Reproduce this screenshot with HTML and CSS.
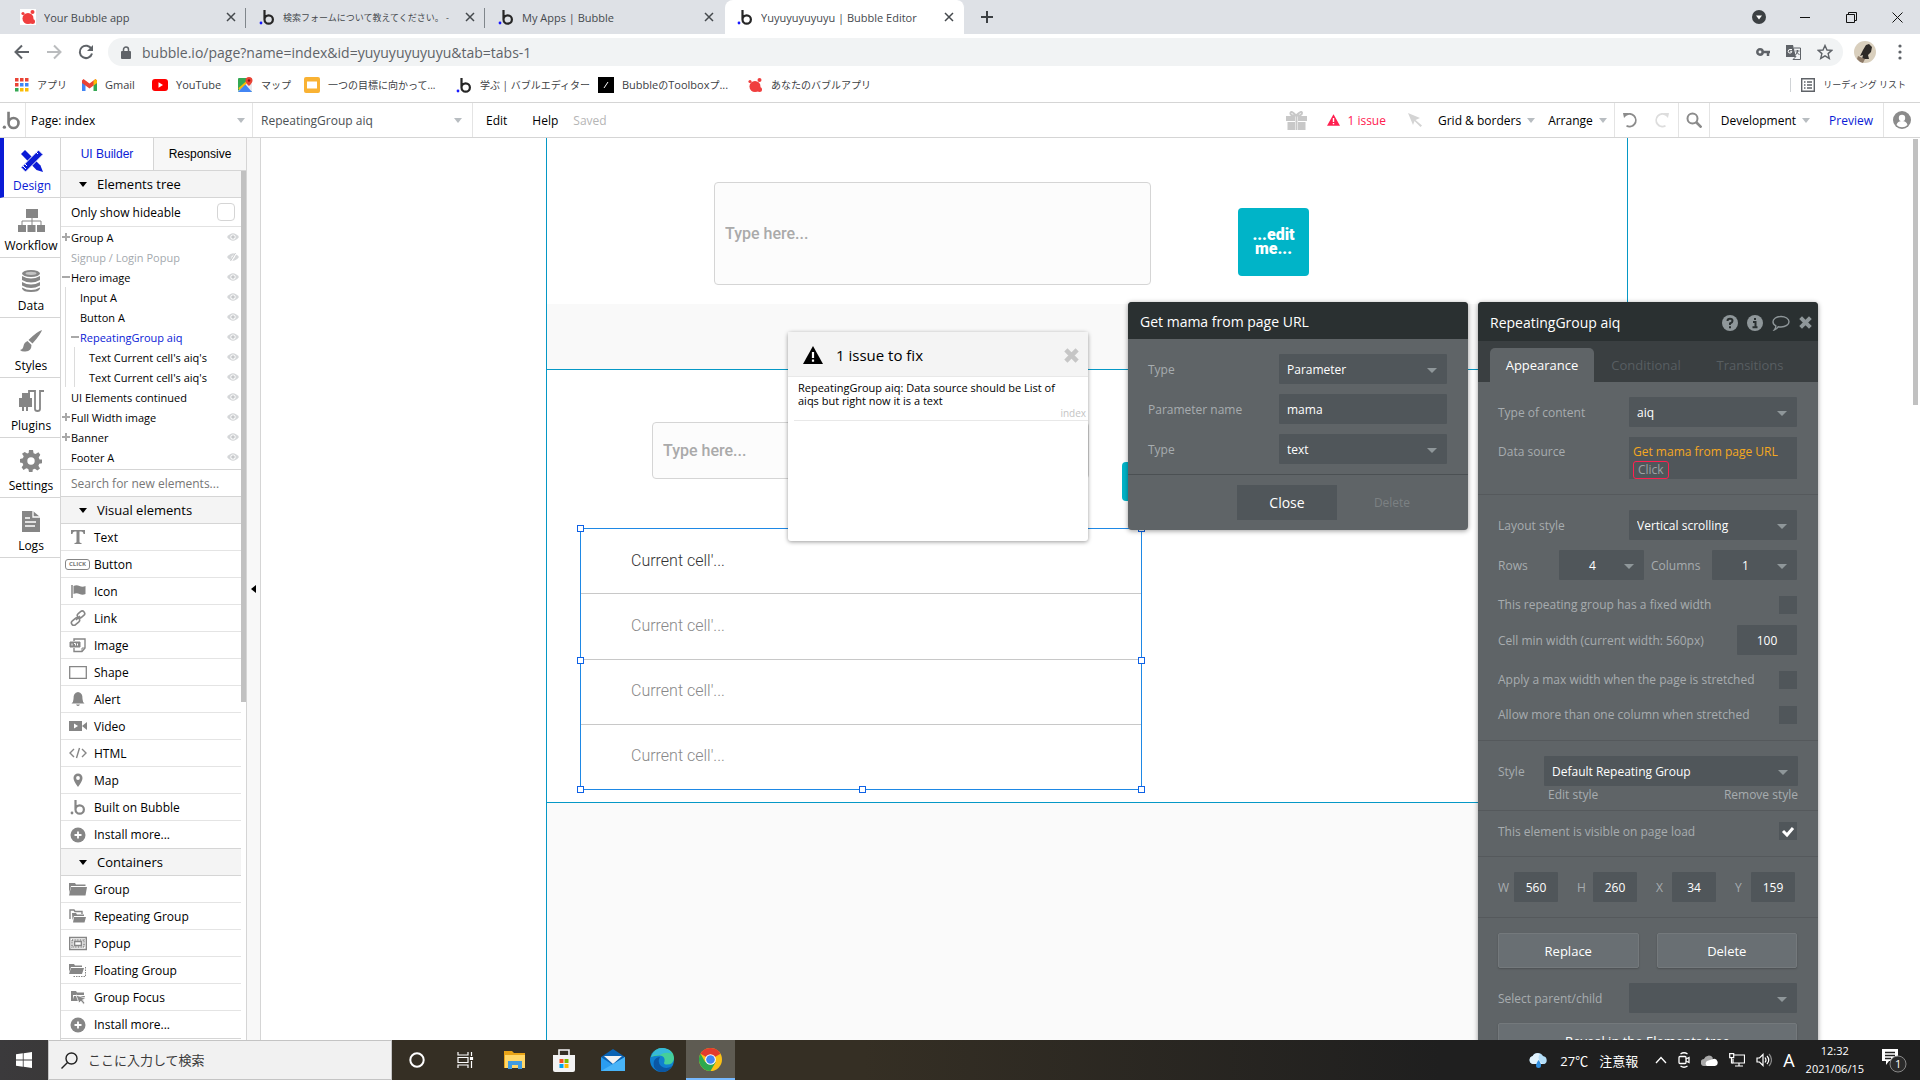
FILE: index.html
```html
<!DOCTYPE html>
<html lang="ja">
<head>
    <meta charset="UTF-8">
    <meta name="viewport" content="width=device-width, initial-scale=1.0">
    <title>Yuyuyuyuyuyu | Bubble Editor</title>
    <link rel="stylesheet" href="styles.css">
</head>
<body>
    <!-- shared icons -->
    <svg class="sprite" width="0" height="0" aria-hidden="true">
        <symbol id="i-b" viewBox="0 0 16 16">
            <path d="M5.5 1v9.5a4.2 4.2 0 1 0 4.2-4.2c-2.4 0-4.2 1.8-4.2 4.2" fill="none" stroke="currentColor" stroke-width="2.2"/>
            <circle class="dot" cx="2" cy="14" r="1.4"/>
        </symbol>
        <symbol id="i-fruit" viewBox="0 0 16 16">
            <circle cx="8" cy="9.500" r="5.500" fill="#f03e3e"/>
            <circle cx="12.500" cy="3" r="2" fill="#f03e3e"/>
            <circle cx="3" cy="4.500" r="1.600" fill="#f03e3e"/>
            <circle cx="12.500" cy="12.500" r="2.500" fill="#f03e3e"/>
        </symbol>
        <symbol id="i-x" viewBox="0 0 10 10"><path d="M1 1l8 8M9 1l-8 8" stroke="currentColor" stroke-width="1.500"/></symbol>
        <symbol id="i-bigx" viewBox="0 0 12 12"><path d="M1.500 1.500l9 9M10.500 1.500l-9 9" stroke="currentColor" stroke-width="3.600"/></symbol>
        <symbol id="i-eye" viewBox="0 0 12 8"><path d="M0 4q6-7.500 12 0q-6 7.500-12 0z" fill="#d4d6d8"/><circle cx="6" cy="4" r="2.600" fill="#fff"/><circle cx="6" cy="4" r="1.800" fill="#c6c8ca"/></symbol>
        <symbol id="i-eye-off" viewBox="0 0 12 8"><path d="M0 4q6-7.500 12 0q-6 7.500-12 0z" fill="#d4d6d8"/><circle cx="6" cy="4" r="1.600" fill="#fff"/><path d="M9 0L4 8" stroke="#fff" stroke-width="2"/><path d="M8.500 0L3.500 8" stroke="#c6c8ca"/></symbol>
        <symbol id="i-plus" viewBox="0 0 8 8"><path d="M4 0v8M0 4h8" stroke="#a8a8a8" stroke-width="2"/></symbol>
        <symbol id="i-minus" viewBox="0 0 8 8"><path d="M0 4h8" stroke="#a8a8a8" stroke-width="2"/></symbol>
        <symbol id="i-warn" viewBox="0 0 20 18"><path d="M10 0L20 18H0z" fill="currentColor"/><path d="M10 6v6M10 13.500v2.200" stroke="#fff" stroke-width="2.200"/></symbol>
        <symbol id="i-more" viewBox="0 0 16 16"><circle cx="8" cy="8" r="7.500" fill="#868686"/><path d="M8 4.500v7M4.500 8h7" stroke="#fff" stroke-width="1.800"/></symbol>
    </svg>

    <header class="browser">
        <div class="tab-strip">
            <div class="tab">
                <svg class="fav on-white"><use href="#i-fruit"/></svg>
                <span class="tab-title">Your Bubble app</span>
                <button class="tab-close" aria-label="Close tab"><svg><use href="#i-x"/></svg></button>
            </div>
            <div class="tab">
                <svg class="fav"><use href="#i-b"/></svg>
                <span class="tab-title ja-small">検索フォームについて教えてください。 -</span>
                <button class="tab-close" aria-label="Close tab"><svg><use href="#i-x"/></svg></button>
            </div>
            <div class="tab">
                <svg class="fav"><use href="#i-b"/></svg>
                <span class="tab-title">My Apps | Bubble</span>
                <button class="tab-close" aria-label="Close tab"><svg><use href="#i-x"/></svg></button>
            </div>
            <div class="tab active">
                <svg class="fav"><use href="#i-b"/></svg>
                <span class="tab-title">Yuyuyuyuyuyu | Bubble Editor</span>
                <button class="tab-close" aria-label="Close tab"><svg><use href="#i-x"/></svg></button>
            </div>
            <button class="new-tab" aria-label="New tab"><svg width="12" height="12" viewBox="0 0 12 12"><path d="M6 0v12M0 6h12" stroke="#3c4043" stroke-width="2"/></svg></button>
            <div class="window-buttons">
                <button aria-label="Search tabs"><svg width="14" height="14" viewBox="0 0 14 14"><circle cx="7" cy="7" r="7" fill="#3c4043"/><path d="M4 5.500h6L7 9.500z" fill="#fff"/></svg></button>
                <button aria-label="Minimize"><svg width="10" height="10" viewBox="0 0 10 10"><path d="M0 5.500h10" stroke="#111"/></svg></button>
                <button aria-label="Restore"><svg width="11" height="11" viewBox="0 0 11 11" fill="none" stroke="#111"><path d="M.5 2.500h8v8h-8zM2.500 2.500v-2h8v8h-2"/></svg></button>
                <button aria-label="Close"><svg width="11" height="11" viewBox="0 0 11 11"><path d="M.5.5l10 10M10.500.5l-10 10" stroke="#111"/></svg></button>
            </div>
        </div>
        <div class="address-row">
            <button aria-label="Back"><svg width="16" height="16" viewBox="0 0 16 16" fill="none" stroke="#5f6368" stroke-width="2"><path d="M15 8H2M8 1.500L1.500 8 8 14.500"/></svg></button>
            <button aria-label="Forward"><svg width="16" height="16" viewBox="0 0 16 16" fill="none" stroke="#babcbe" stroke-width="2"><path d="M1 8h13M8 1.500L14.500 8 8 14.500"/></svg></button>
            <button aria-label="Reload"><svg width="16" height="16" viewBox="0 0 16 16"><path d="M13.500 5A6.200 6.200 0 1 0 14 9.500" fill="none" stroke="#5f6368" stroke-width="2"/><path d="M15 1v6H9z" fill="#5f6368"/></svg></button>
            <div class="address">
                <svg width="10" height="13" viewBox="0 0 10 13"><rect y="5" width="10" height="8" rx="1" fill="#5f6368"/><path d="M2.500 5V3.500a2.500 2.500 0 0 1 5 0V5" fill="none" stroke="#5f6368" stroke-width="1.500"/></svg>
                <input type="text" aria-label="Address" value="bubble.io/page?name=index&amp;id=yuyuyuyuyuyu&amp;tab=tabs-1">
                <svg width="14" height="10" viewBox="0 0 14 10"><circle cx="4" cy="5" r="2.700" fill="none" stroke="#5f6368" stroke-width="2.500"/><path d="M6 5h8M12 5v4" stroke="#5f6368" stroke-width="2.500"/></svg>
                <svg width="15" height="15" viewBox="0 0 15 15"><path d="M0 0h7l3 12H0z" fill="#5f6368"/><path d="M8 3h6.500v11.500H7l3-3M9.500 6h4M11.500 5v1q0 2-2 4M10.500 7l3 3" fill="none" stroke="#5f6368"/><path d="M6 4.500H4a1.800 1.800 0 1 0 1.800 1.800H4.200" fill="none" stroke="#fff"/></svg>
                <svg width="16" height="16" viewBox="0 0 16 16"><path d="M8 1.500l2 4.500 4.800.4-3.700 3.200 1.200 4.800L8 11.800l-4.300 2.600 1.200-4.800L1.200 6.400 6 6z" fill="none" stroke="#5f6368" stroke-width="1.400"/></svg>
            </div>
            <svg class="avatar" width="22" height="22" viewBox="0 0 22 22"><circle cx="11" cy="11" r="11" fill="#d9cfbd"/><path d="M12 4l3-1 3 3-1 5-3 3 1 4H8l1-4-3 1 3-6z" fill="#2d2926"/><path d="M4 15l7 3-2 4a11 11 0 0 1-6-4z" fill="#8d7a68"/></svg>
            <button aria-label="Menu"><svg width="4" height="16" viewBox="0 0 4 16" fill="#5f6368"><circle cx="2" cy="2" r="1.600"/><circle cx="2" cy="8" r="1.600"/><circle cx="2" cy="14" r="1.600"/></svg></button>
        </div>
        <nav class="bookmarks">
            <a href="#"><svg width="14" height="14" viewBox="0 0 14 14"><path d="M0 0h3.500v3.500H0zM5 0h3.500v3.500H5zM10 0h3.500v3.500H10zM0 5h3.500v3.500H0z" fill="#ea4335"/><path d="M5 5h3.500v3.500H5zM10 5h3.500v3.500H10z" fill="#4285f4"/><path d="M0 10h3.500v3.500H0z" fill="#34a853"/><path d="M5 10h3.500v3.500H5zM10 10h3.500v3.500H10z" fill="#fbbc04"/></svg><span class="ja">アプリ</span></a>
            <a href="#"><svg width="15" height="12" viewBox="0 0 15 12"><path d="M0 1.500V12h3.500V5z" fill="#4285f4"/><path d="M15 1.500V12h-3.500V5z" fill="#34a853"/><path d="M0 1.500L1.500 0 7.500 4.500 13.500 0 15 1.500V4L7.500 9.500 0 4z" fill="#ea4335"/><path d="M11.500 2L13.500 0 15 1.500V4l-3.500 2.600z" fill="#fbbc04"/></svg><span>Gmail</span></a>
            <a href="#"><svg width="16" height="12" viewBox="0 0 16 12"><rect width="16" height="12" rx="3" fill="#f00"/><path d="M6.500 3.200v5.600L11 6z" fill="#fff"/></svg><span>YouTube</span></a>
            <a href="#"><svg width="15" height="15" viewBox="0 0 15 15"><rect y="1" width="14" height="14" rx="1" fill="#34a853"/><path d="M0 14L13 1l1 1v12l-1 1H1z" fill="#e8eaed"/><path d="M0 15L7 7l7 8z" fill="#4285f4"/><path d="M1 12L11 3" stroke="#fbbc04" stroke-width="2"/><path d="M11 0a3.500 3.500 0 0 1 3.500 3.500C14.500 6 11 9 11 9S7.500 6 7.500 3.500A3.500 3.500 0 0 1 11 0z" fill="#ea4335"/><circle cx="11" cy="3.500" r="1.200" fill="#811"/></svg><span class="ja">マップ</span></a>
            <a href="#"><svg width="16" height="16" viewBox="0 0 16 16"><rect width="16" height="16" rx="2" fill="#f9b233"/><path d="M3 4.500h10v7H3z" fill="#fff"/></svg><span class="ja">一つの目標に向かって...</span></a>
            <a href="#"><svg class="fav"><use href="#i-b"/></svg><span class="ja">学ぶ | バブルエディター</span></a>
            <a href="#"><svg width="16" height="16" viewBox="0 0 16 16"><path d="M0 0h16v16H0z"/><path d="M6 11l4-6" stroke="#fff"/></svg><span>Bubble<span class="ja">の</span>Toolbox<span class="ja">プ</span>...</span></a>
            <a href="#"><svg class="fav"><use href="#i-fruit"/></svg><span class="ja">あなたのバブルアプリ</span></a>
            <a href="#" class="reading"><svg width="14" height="14" viewBox="0 0 14 14" fill="none" stroke="#5f6368"><path d="M.7.700h12.600v12.600H.7z" stroke-width="1.400"/><path d="M3 4h1.500M3 7h1.500M3 10h1.500M6 4h5M6 7h5M6 10h5" stroke-width="1.300"/></svg><span class="ja-small">リーディング リスト</span></a>
        </nav>
    </header>

    <div class="editor-bar">
        <a href="#" class="logo" aria-label="Bubble"><svg width="19" height="20"><use href="#i-b"/></svg></a>
        <button class="picker page-picker">Page: index<i class="caret"></i></button>
        <button class="picker element-picker">RepeatingGroup aiq<i class="caret"></i></button>
        <button class="plain">Edit</button>
        <button class="plain">Help</button>
        <span class="saved">Saved</span>
        <div class="bar-right">
            <svg class="gift" width="21" height="19" viewBox="0 0 21 19" fill="#c8c8c8"><path d="M0 5h9v5H0zM12 5h9v5h-9zM1.500 11H9v8H1.500zM12 11h7.500v8H12z"/><path d="M9.500 5h2v14h-2z"/><path d="M10 4.500Q4 5 4.500 2T10 4.500Q16 5 16 2t-6 2.500" fill="none" stroke="#c8c8c8" stroke-width="2"/></svg>
            <button class="issue"><svg width="13" height="12"><use href="#i-warn"/></svg>1 issue</button>
            <svg class="cursor" width="14" height="14" viewBox="0 0 14 14"><path d="M0 0l12 5-4.500 2L14 12.500 12.500 14 6.500 8 5 12z" fill="#d4d4d4"/></svg>
            <button class="menu">Grid &amp; borders<i class="caret small"></i></button>
            <button class="menu">Arrange<i class="caret small"></i></button>
            <button class="tool" aria-label="Undo"><svg width="16" height="16" viewBox="0 0 16 16"><path d="M4 3a6.300 6.300 0 1 1 .5 10.800" fill="none" stroke="#8b8b8b" stroke-width="1.800"/><path d="M1 1h6L2 6z" fill="#8b8b8b"/></svg></button>
            <button class="tool" aria-label="Redo"><svg width="16" height="16" viewBox="0 0 16 16"><path d="M12 3a6.300 6.300 0 1 0-.5 10.800" fill="none" stroke="#ddd" stroke-width="1.800"/><path d="M15 1H9l5 5z" fill="#ddd"/></svg></button>
            <button class="tool lined" aria-label="Search"><svg width="16" height="16" viewBox="0 0 16 16" fill="none" stroke="#8b8b8b" stroke-width="2"><circle cx="6.500" cy="6.500" r="5"/><path d="M10 10l5.500 5.500" stroke-width="2.600"/></svg></button>
            <button class="menu dev">Development<i class="caret small"></i></button>
            <a href="#" class="preview">Preview</a>
            <button class="user" aria-label="Account"><svg width="18" height="18" viewBox="0 0 18 18"><circle cx="9" cy="9" r="9" fill="#8b8b8b"/><circle cx="9" cy="7" r="3.200" fill="#fff"/><path d="M3.500 14q1-4 5.500-4t5.500 4a7.800 7.800 0 0 1-11 0z" fill="#fff"/></svg></button>
        </div>
    </div>

    <div class="workspace">
        <nav class="side-nav">
            <a href="#" class="active"><svg width="22" height="22" viewBox="0 0 22 22" fill="currentColor"><path d="M4 0l15.500 15.500L22 22l-6.500-2L0 4z"/><path d="M17.500 0L22 4.500 4.500 22 0 17.500z" stroke="#fff"/><path d="M2 16l3 3M4 14l2 2M15 2l2 2" stroke="#fff"/></svg>Design</a>
            <a href="#"><svg width="27" height="23" viewBox="0 0 27 23" fill="#868686"><path d="M8 0h12v9H8zM0 16h8v7H0zM9.500 16h8v7h-8zM19 16h8v7h-8z"/><path d="M14 9v7M4 16v-4h19v4" fill="none" stroke="#868686"/></svg>Workflow</a>
            <a href="#"><svg width="18" height="22" viewBox="0 0 18 22" fill="#868686"><ellipse cx="9" cy="3.500" rx="9" ry="3.500"/><path d="M0 6q9 5 18 0v4q-9 5-18 0zM0 12q9 5 18 0v3.500q-9 5-18 0zM0 17.500q9 5 18 0v1q-1 3.500-9 3.500t-9-3.500z"/><ellipse cx="9" cy="3.300" rx="5.500" ry="1.600" fill="#c4c4c4"/></svg>Data</a>
            <a href="#"><svg width="22" height="22" viewBox="0 0 22 22" fill="#868686"><path d="M22 0q-1 4-9.500 13.500L8.500 10Q17 1.500 22 0zM7.500 11l4 4q0 6-6 6.500Q2 22 0 20q3-.5 3.500-4t4-5z"/></svg>Styles</a>
            <a href="#"><svg width="25" height="22" viewBox="0 0 25 22" fill="#868686"><path d="M0 8h13v9H9v4H7v-4H5v4H3v-4H0zM3 3h8v6H3z"/><path d="M10 3V1h6v18q0 2 2.500 2t2.500-2V1h4" fill="none" stroke="#868686" stroke-width="1.800"/></svg>Plugins</a>
            <a href="#"><svg width="22" height="22" viewBox="0 0 22 22" fill="#868686"><path d="M9 0h4l.6 3.200 2 .9L18.400 2.200l1.900 2.600-1.600 2.600.8 2H22v3.800l-2.800.6-.8 1.900 1.600 2.800-2.600 1.900-2.500-1.700-2.100.9L12.500 22h-3.500l-.7-2.900-2-.8-2.800 1.600-1.900-2.600L3.300 15l-.8-2L0 12.500V9l2.900-.7.8-2L2 3.700 4.700 1.900l2.500 1.700 1.400-.6z"/><circle cx="11" cy="11" r="3.700" fill="#fff"/></svg>Settings</a>
            <a href="#"><svg width="18" height="21" viewBox="0 0 18 21" fill="#868686"><path d="M0 0h11l7 6v15H0z"/><path d="M11 0v6h7M3 7h5M3 11h11M3 15h10" fill="none" stroke="#fff" stroke-width="1.300"/></svg>Logs</a>
        </nav>

        <aside class="panel">
            <div class="panel-tabs">
                <button class="active">UI Builder</button>
                <button>Responsive</button>
            </div>
            <div class="panel-scroll">
                <div class="panel-content">
                    <h2>Elements tree</h2>
                    <label class="hideable">Only show hideable<input type="checkbox"></label>
                    <ul class="tree">
                        <li><div><svg class="tg"><use href="#i-plus"/></svg>Group A<svg class="eye"><use href="#i-eye"/></svg></div></li>
                        <li class="hidden-el"><div><i class="tg"></i>Signup / Login Popup<svg class="eye"><use href="#i-eye-off"/></svg></div></li>
                        <li><div><svg class="tg"><use href="#i-minus"/></svg>Hero image<svg class="eye"><use href="#i-eye"/></svg></div>
                            <ul>
                                <li><div><i class="tg"></i>Input A<svg class="eye"><use href="#i-eye"/></svg></div></li>
                                <li><div><i class="tg"></i>Button A<svg class="eye"><use href="#i-eye"/></svg></div></li>
                                <li><div class="selected"><svg class="tg"><use href="#i-minus"/></svg>RepeatingGroup aiq<svg class="eye"><use href="#i-eye"/></svg></div>
                                    <ul>
                                        <li><div><i class="tg"></i>Text Current cell's aiq's<svg class="eye"><use href="#i-eye"/></svg></div></li>
                                        <li><div><i class="tg"></i>Text Current cell's aiq's<svg class="eye"><use href="#i-eye"/></svg></div></li>
                                    </ul>
                                </li>
                            </ul>
                        </li>
                        <li><div><i class="tg"></i>UI Elements continued<svg class="eye"><use href="#i-eye"/></svg></div></li>
                        <li><div><svg class="tg"><use href="#i-plus"/></svg>Full Width image<svg class="eye"><use href="#i-eye"/></svg></div></li>
                        <li><div><svg class="tg"><use href="#i-plus"/></svg>Banner<svg class="eye"><use href="#i-eye"/></svg></div></li>
                        <li><div><i class="tg"></i>Footer A<svg class="eye"><use href="#i-eye"/></svg></div></li>
                    </ul>
                    <input class="element-search" type="text" aria-label="Search for new elements" placeholder="Search for new elements...">
                    <h2>Visual elements</h2>
                    <ul class="palette">
                        <li><svg viewBox="0 0 18 16"><path d="M2 1h14v4h-1.500q0-2.500-2.500-2.500h-1.500V13q0 1 2 1v1h-7v-1q2 0 2-1V2.500H6Q3.500 2.500 3.500 5H2z" fill="#868686"/></svg>Text</li>
                        <li><span class="click-icon">CLICK</span>Button</li>
                        <li><svg viewBox="0 0 18 16"><path d="M3 2v13" stroke="#868686" stroke-width="1.500"/><path d="M4.500 3q3-1.500 6 0t6 0v8q-3 1.500-6 0t-6 0z" fill="#868686"/></svg>Icon</li>
                        <li><svg viewBox="0 0 18 16" fill="none" stroke="#868686" stroke-width="1.600"><rect x="8" y="2" width="8" height="5" rx="2.500" transform="rotate(-40 12 4.500)"/><rect x="2" y="9" width="9" height="5" rx="2.500" transform="rotate(-40 6.500 11.500)"/><path d="M7 10l4-4"/></svg>Link</li>
                        <li><svg viewBox="0 0 18 16" fill="none" stroke="#868686"><path d="M5 4V2h11v9l-3 3.500H5V11" stroke-width="1.400"/><path d="M13 14v-3h3"/><path d="M1 5h10v5H1z" fill="#868686"/><path d="M3 6.500v2M5 6.500h1.500v2M8.500 6.500v2" stroke="#fff"/></svg>Image</li>
                        <li><svg viewBox="0 0 18 16"><path d="M.7 2.700h16.600v11.600H.7z" fill="none" stroke="#868686" stroke-width="1.300"/></svg>Shape</li>
                        <li><svg viewBox="0 0 18 16" fill="#868686"><path d="M9 1q5 1 4.500 7 0 3 2 4.500h-13Q4.500 11 4.500 8 4 2 9 1z"/><path d="M7 13.500h4q-2 3-4 0z"/></svg>Alert</li>
                        <li><svg viewBox="0 0 18 16"><path d="M0 3h13v10H0zM13 8l5-4v8z" fill="#868686"/><path d="M5 5.500v5L9 8z" fill="#fff"/></svg>Video</li>
                        <li><svg viewBox="0 0 18 16"><path d="M5 4L1 8l4 4M13 4l4 4-4 4M10.500 3l-3 10" fill="none" stroke="#868686" stroke-width="1.400"/></svg>HTML</li>
                        <li><svg viewBox="0 0 18 16"><path d="M9 1.500a4.500 4.500 0 0 1 4.500 4.500Q13.500 9 9 15 4.500 9 4.500 6A4.500 4.500 0 0 1 9 1.500z" fill="#868686"/><circle cx="9" cy="6" r="1.900" fill="#fff"/></svg>Map</li>
                        <li><svg class="grey-b"><use href="#i-b"/></svg>Built on Bubble</li>
                        <li><svg><use href="#i-more"/></svg>Install more...</li>
                    </ul>
                    <h2>Containers</h2>
                    <ul class="palette">
                        <li><svg viewBox="0 0 18 16"><path d="M0 2h6l1 1.500h9.500V5H2L0 12zM2 6H18l-1.500 8.500H0z" fill="#868686"/></svg>Group</li>
                        <li><svg viewBox="0 0 18 16"><path d="M1 11V2h4l1 1.500h7V6" fill="none" stroke="#868686" stroke-width="1.400"/><path d="M3 5h4l1 1.500h7V8H5l-1.500 4zM5 9h12l-1.500 5.500H4z" fill="#868686"/></svg>Repeating Group</li>
                        <li><svg viewBox="0 0 18 16" fill="none" stroke="#868686"><path d="M.7 2.500h16.600v12H.7z" stroke-width="1.400"/><path d="M3 5h12v7H3z" stroke-width="1.600" stroke-dasharray="1 .6"/><path d="M5.500 6.500h7v4h-7z" stroke-width="1.600"/></svg>Popup</li>
                        <li><svg viewBox="0 0 18 16"><path d="M0 2h5l1 1.500h7V5H2L0 10zM2 6h13l-2 6H0z" fill="#868686"/><path d="M16.500 5v9.500h-12" fill="none" stroke="#868686" stroke-dasharray="1.500 1"/></svg>Floating Group</li>
                        <li><svg viewBox="0 0 18 16"><path d="M2 2h5l1 1.500h7V6H4v6H2z" fill="#868686"/><path d="M5 7h11l-2 5H3.500z" fill="#868686"/><path d="M7 6l10 3.500-3.500 1.300L16 14l-1.500 1.200-2.500-3L10 14z" fill="#868686" stroke="#fff" stroke-width=".8"/></svg>Group Focus</li>
                        <li><svg><use href="#i-more"/></svg>Install more...</li>
                    </ul>
                </div>
                <div class="panel-thumb"></div>
            </div>
        </aside>
        <button class="collapse" aria-label="Collapse panel"></button>

        <main class="canvas">
            <div class="artboard">
                <section class="hero"></section>
                <section class="hero-tail"></section>
                <section class="middle"></section>
                <section class="rest"></section>
                <input class="field field-top" type="text" aria-label="Input A" placeholder="Type here...">
                <button class="cta cta-top">...edit me...</button>
                <input class="field field-mid" type="text" aria-label="Input" placeholder="Type here...">
                <button class="cta cta-mid" aria-label="Button A"></button>
                <div class="rg">
                    <div class="cell">Current cell'...</div>
                    <div class="cell">Current cell'...</div>
                    <div class="cell">Current cell'...</div>
                    <div class="cell">Current cell'...</div>
                    <i class="handle nw"></i><i class="handle ne"></i><i class="handle w"></i><i class="handle e"></i>
                    <i class="handle sw"></i><i class="handle s"></i><i class="handle se"></i>
                </div>
            </div>
            <div class="canvas-thumb"></div>
        </main>

        <section class="issues">
            <header><svg width="20" height="18"><use href="#i-warn"/></svg>1 issue to fix<button aria-label="Close"><svg width="15" height="15"><use href="#i-bigx"/></svg></button></header>
            <div class="issue-item">
                <p>RepeatingGroup aiq: Data source should be List of aiqs but right now it is a text</p>
                <small>index</small>
            </div>
        </section>

        <section class="props expression">
            <header>Get mama from page URL</header>
            <div class="group">
                <div class="row"><label for="p-type">Type</label><span class="select wide"><select id="p-type"><option>Parameter</option></select></span></div>
                <div class="row"><label for="p-name">Parameter name</label><input class="wide" id="p-name" type="text" value="mama"></div>
                <div class="row"><label for="p-kind">Type</label><span class="select wide"><select id="p-kind"><option>text</option></select></span></div>
            </div>
            <footer><button class="close-btn">Close</button><button class="delete-link" disabled>Delete</button></footer>
        </section>

        <section class="props editor">
            <header>RepeatingGroup aiq
                <span class="head-icons">
                    <svg width="16" height="16" viewBox="0 0 16 16"><circle cx="8" cy="8" r="8" fill="#8f979a"/><path d="M5.500 6Q5.500 3.700 8 3.700T10.500 6Q10.500 7.500 8 8.500V10M8 11.200v2" fill="none" stroke="#2a3031" stroke-width="2"/></svg>
                    <svg width="16" height="16" viewBox="0 0 16 16"><circle cx="8" cy="8" r="8" fill="#8f979a"/><path d="M8 3v2M6 7h2.500v5M5.500 12.300h5" fill="none" stroke="#2a3031" stroke-width="2"/></svg>
                    <svg width="18" height="16" viewBox="0 0 18 16"><path d="M9 1.500c4.500 0 8 2.300 8 5.200s-3.500 5.300-8 5.300q-1.500 0-2.800-.3Q5 14 2.500 14.800 4 13 3.800 10.800 1 9.300 1 6.700C1 3.800 4.500 1.500 9 1.500z" fill="none" stroke="#8f979a" stroke-width="1.400"/></svg>
                    <svg width="13" height="13"><use href="#i-bigx"/></svg>
                </span>
            </header>
            <div class="prop-tabs">
                <button class="active">Appearance</button>
                <button>Conditional</button>
                <button>Transitions</button>
            </div>
            <div class="group">
                <div class="row"><label for="e-type">Type of content</label><span class="select wide"><select id="e-type"><option>aiq</option></select></span></div>
                <div class="row top"><span class="name">Data source</span><div class="source wide"><a href="#">Get mama from page URL</a><button>Click</button></div></div>
            </div>
            <div class="group">
                <div class="row"><label for="e-layout">Layout style</label><span class="select wide"><select id="e-layout"><option>Vertical scrolling</option></select></span></div>
                <div class="row counts"><label for="e-rows">Rows</label><span class="select count"><select id="e-rows"><option>4</option></select></span><label for="e-cols">Columns</label><span class="select count"><select id="e-cols"><option>1</option></select></span></div>
                <div class="row check"><label for="e-fixed">This repeating group has a fixed width</label><input id="e-fixed" type="checkbox"></div>
                <div class="row"><label for="e-min">Cell min width (current width: 560px)</label><input class="min" id="e-min" type="text" value="100"></div>
                <div class="row check"><label for="e-max">Apply a max width when the page is stretched</label><input id="e-max" type="checkbox"></div>
                <div class="row check"><label for="e-more">Allow more than one column when stretched</label><input id="e-more" type="checkbox"></div>
            </div>
            <div class="group style-group">
                <div class="row"><label for="e-style">Style</label><span class="select style-select"><select id="e-style"><option>Default Repeating Group</option></select></span></div>
                <div class="style-links"><a href="#">Edit style</a><a href="#">Remove style</a></div>
            </div>
            <div class="group visible-group">
                <div class="row"><label for="e-vis">This element is visible on page load</label><input id="e-vis" type="checkbox" checked></div>
            </div>
            <div class="group">
                <div class="sizes">
                    <label for="e-w">W</label><input id="e-w" type="text" value="560">
                    <label for="e-h">H</label><input id="e-h" type="text" value="260">
                    <label for="e-x">X</label><input id="e-x" type="text" value="34">
                    <label for="e-y">Y</label><input id="e-y" type="text" value="159">
                </div>
            </div>
            <div class="group">
                <div class="actions"><button>Replace</button><button>Delete</button></div>
                <div class="row"><label for="e-parent">Select parent/child</label><span class="select wide"><select id="e-parent"><option></option></select></span></div>
                <div class="actions"><button>Reveal in the Elements tree</button></div>
            </div>
        </section>
    </div>

    <footer class="taskbar">
        <button class="start" aria-label="Start"><svg width="16" height="16" viewBox="0 0 16 16" fill="#fff"><path d="M0 2.300L6.800 1.300V7.600H0zM7.600 1.200L16 0v7.600H7.600zM0 8.400h6.800v6.400L0 13.800zM7.600 8.400H16V16l-8.400-1.200z"/></svg></button>
        <label class="task-search">
            <svg width="17" height="17" viewBox="0 0 17 17" fill="none" stroke="#222" stroke-width="1.400"><circle cx="10.500" cy="6.500" r="5.500"/><path d="M6.500 10.500L.5 16.500"/></svg>
            <input type="text" aria-label="Search" placeholder="ここに入力して検索">
        </label>
        <div class="task-apps">
            <button aria-label="Cortana"><svg width="16" height="16" viewBox="0 0 16 16"><circle cx="8" cy="8" r="6.700" fill="none" stroke="#fff" stroke-width="2"/></svg></button>
            <button aria-label="Task view"><svg width="17" height="16" viewBox="0 0 17 16" fill="none" stroke="#fff" stroke-width="1.200"><path d="M1 0v3h10V0M1 5.500h10v5H1zM1 16v-3h10v3M14.500 0v4M14.500 9v7"/><path d="M13.500 5.500h2v2h-2z" fill="#fff"/></svg></button>
            <button aria-label="Explorer"><svg width="22" height="18" viewBox="0 0 22 18"><path d="M0 0h8l2 2h11v15H0z" fill="#e8a317"/><path d="M1 4h20v13H1z" fill="#ffd768"/><path d="M4 18v-8h14v8h-4v-4H8v4z" fill="#3f9be0"/></svg></button>
            <button aria-label="Store"><svg width="22" height="23" viewBox="0 0 22 23"><path d="M6 7V1h10v6" fill="none" stroke="#f3f3f3" stroke-width="1.600"/><path d="M0 6h22v15q0 2-2 2H2q-2 0-2-2z" fill="#f3f3f3"/><path d="M6.500 10h4v4h-4z" fill="#f25022"/><path d="M11.500 10h4v4h-4z" fill="#7fba00"/><path d="M6.500 15h4v4h-4z" fill="#00a4ef"/><path d="M11.500 15h4v4h-4z" fill="#ffb900"/></svg></button>
            <button aria-label="Mail"><svg width="24" height="22" viewBox="0 0 24 22"><path d="M0 8l12-8 12 8-12 9z" fill="#0a63b4"/><path d="M3 7h18l-9 8z" fill="#f3f3f3"/><path d="M0 8l12 8L24 8v14H0z" fill="#2a9df0"/><path d="M0 22L24 8v14z" fill="#48b4f8"/></svg></button>
            <button aria-label="Edge"><svg width="24" height="24" viewBox="0 0 24 24"><circle cx="12" cy="12" r="12" fill="#1080d0"/><path d="M1 9Q4 0 12.500 0 24 1 24 11q-1 6-8 5.500-3-.5-1.500-3 1-5.500-5-6Q4 7.500 1 9z" fill="#45cf9a"/><path d="M1 9Q5 0 13 0q7 1 9 6-6-3-12 1-5-1-9 2z" fill="#36b8dc"/><path d="M10 9q-3 5 1 9 5 4 11 0-4 7-12 6Q2 21 4 13q2-4 6-4z" fill="#0b57a4"/></svg></button>
            <button class="running" aria-label="Chrome"><svg width="23" height="23" viewBox="0 0 24 24"><circle cx="12" cy="12" r="12" fill="#fbc116"/><path d="M12 12L1.600 6A12 12 0 0 1 22.400 6z" fill="#e33b2e"/><path d="M1.600 6A12 12 0 0 0 12 24l5.500-9.500H6.500z" fill="#2da94f"/><circle cx="12" cy="12" r="5.600" fill="#fff"/><circle cx="12" cy="12" r="4.500" fill="#4285f4"/></svg></button>
        </div>
        <div class="tray">
            <svg class="weather" width="21" height="16" viewBox="0 0 21 16"><path d="M5 12a4 4 0 0 1-.5-7.800A6 6 0 0 1 15 4a4.300 4.300 0 0 1 1.500 8z" fill="#b4def8"/><path d="M5 12a4 4 0 0 1-.5-7.800A6 6 0 0 1 12 2Q8 7 15 12z" fill="#e2f3fd"/><path d="M10.500 8q3 4 2.500 5.500a2.500 2.500 0 0 1-5 0Q8 12 10.500 8z" fill="#2f8fe0"/></svg>
            <span class="temp">27℃</span><span class="notice">注意報</span>
            <svg width="12" height="8" viewBox="0 0 12 8"><path d="M1 7l5-5.500L11 7" fill="none" stroke="#fff" stroke-width="1.300"/></svg>
            <svg width="12" height="16" viewBox="0 0 12 16" fill="none" stroke="#fff" stroke-width="1.300"><rect x="1" y="4.500" width="7" height="7" rx="1"/><path d="M8 7l3-1.500v5L8 9M2.500 2Q6-.5 9.500 2M2.500 14q3.500 2.500 7 0"/></svg>
            <svg width="17" height="11" viewBox="0 0 17 11"><path d="M3.500 11A3.500 3.500 0 0 1 3 4a5 5 0 0 1 9-1l-5 8z" fill="#a9a9a9"/><path d="M6 11a3 3 0 0 1 0-5l6-2a3.600 3.600 0 0 1 2 7z" fill="#fff"/></svg>
            <svg width="16" height="14" viewBox="0 0 16 14" fill="none" stroke="#fff" stroke-width="1.200"><path d="M5 2h10.500v8H4V6M10 10v3M6 13h8"/><path d="M.7.700h4v4h-4zM2.500 5v5H4"/></svg>
            <svg width="16" height="14" viewBox="0 0 16 14" fill="none" stroke="#fff" stroke-width="1.200"><path d="M1 5h2.500L7 1.500v11L3.500 9H1zM9 4.500q2 2.500 0 5M11 3q3.500 4 0 8"/><path d="M13 1q5 6 0 12" stroke="#888"/></svg>
            <span class="ime">A</span>
            <time>12:32<br>2021/06/15</time>
            <svg class="notif" width="26" height="26" viewBox="0 0 26 26"><path d="M1 2h16v12H8l-3 4v-4H1z" fill="#fff"/><path d="M4 5.500h10M4 8.500h10M4 11.500h6" stroke="#222" stroke-width="1.300"/><circle cx="17" cy="17" r="8" fill="#2b2b2b" stroke="#888"/><text x="14" y="21" fill="#fff" font-size="11">1</text></svg>
        </div>
    </footer>
</body>
</html>
```
FILE: styles.css
```css
* {
    box-sizing: border-box;
}
body {
    margin: 0;
    height: 100vh;
    display: flex;
    flex-direction: column;
    overflow: hidden;
    background: #fff;
    color: #000;
    font-family: "Open Sans", "Noto Sans CJK JP", sans-serif;
    font-size: 12px;
}
a {
    color: inherit;
    text-decoration: none;
}
button,
input,
select {
    font: inherit;
    color: inherit;
    border: none;
    border-radius: 0;
    background: none;
    padding: 0;
    margin: 0;
    outline: none;
}
ul {
    list-style: none;
    margin: 0;
    padding: 0;
}
svg {
    display: block;
    flex: none;
}
.sprite {
    position: absolute;
}

/* browser chrome */
.tab-strip {
    display: flex;
    height: 34px;
    padding-left: 8px;
    background: #dee1e6;
}
.tab {
    display: flex;
    align-items: center;
    width: 239px;
    padding: 0 7px 0 12px;
    gap: 8px;
    color: #45494d;
    font-size: 11px;
    border-right: 1px solid #dee1e6;
    background: linear-gradient(#80868b, #80868b) right 8px / 1px 20px no-repeat;
}
.tab:nth-child(3) {
    background: none;
}
.tab.active {
    width: 240px;
    background: #fff;
    border-radius: 8px 8px 0 0;
}
.fav {
    width: 16px;
    height: 16px;
    color: #262626;
    fill: #1a1aff;
}
.on-white {
    background: #fff;
}
.tab-title {
    flex: 1;
    overflow: hidden;
    white-space: nowrap;
}
.ja-small {
    font-size: 9px;
}
.tab-close svg {
    width: 10px;
    height: 10px;
    margin: 3px;
}
.new-tab {
    margin-left: 16px;
}
.window-buttons {
    display: flex;
    align-items: center;
    margin-left: auto;
}
.window-buttons button {
    display: flex;
    justify-content: center;
    width: 46px;
}
.address-row {
    display: flex;
    align-items: center;
    height: 36px;
    padding: 0 18px 0 14px;
    gap: 16px;
}
.address {
    display: flex;
    align-items: center;
    flex: 1;
    height: 28px;
    padding: 0 10px 0 13px;
    gap: 16px;
    margin-left: -2px;
    border-radius: 14px;
    background: #f1f3f4;
}
.address input {
    flex: 1;
    margin-left: -5px;
    font-size: 14px;
    color: #5f6368;
}
.avatar {
    margin: 0 6px 0 -5px;
}
.bookmarks {
    display: grid;
    grid-template-columns: 67px 70px 86px 66px 152px 142px 149px 1fr auto;
    align-items: center;
    height: 32px;
    padding: 0 14px 3px 15px;
    color: #3c4043;
    font-size: 11px;
}
.bookmarks a {
    display: flex;
    align-items: center;
    gap: 8px;
    white-space: nowrap;
}
.ja {
    font-size: 10px;
}
.reading {
    padding-left: 10px;
    border-left: 1px solid #d0d3d6;
}

/* editor top bar */
.editor-bar {
    display: flex;
    align-items: stretch;
    height: 36px;
    border-top: 1px solid #d5d5d5;
    border-bottom: 1px solid #d5d5d5;
}
.logo {
    display: flex;
    align-items: center;
    width: 26px;
    padding-left: 2px;
    color: #7d7d7d;
    fill: #7d7d7d;
    border-right: 1px solid #e4e4e4;
}
.caret {
    width: 0;
    height: 0;
    border: 4px solid transparent;
    border-top: 5px solid #b8bdc1;
    border-bottom: none;
}
.caret.small {
    margin-left: 6px;
}
.picker {
    display: flex;
    align-items: center;
    justify-content: space-between;
    border-right: 1px solid #e4e4e4;
}
.page-picker {
    width: 227px;
    padding: 0 7px 0 5px;
}
.element-picker {
    width: 220px;
    padding: 0 10px 0 8px;
    color: #4b5054;
}
.plain {
    margin-left: 13px;
}
.plain + .plain {
    margin-left: 25px;
}
.saved {
    align-self: center;
    margin-left: 15px;
    color: #b5b5b5;
}
.bar-right {
    display: flex;
    align-items: stretch;
    margin-left: auto;
}
.bar-right > svg {
    align-self: center;
}
.gift {
    margin-right: 20px;
}
.issue {
    display: flex;
    align-items: center;
    gap: 7px;
    color: #ff2050;
    margin-right: 22px;
}
.cursor {
    margin-right: 16px;
}
.menu {
    display: flex;
    align-items: center;
    margin-right: 13px;
}
.menu + .tool {
    border-left: 1px solid #e4e4e4;
    margin-left: -6px;
}
.tool {
    display: flex;
    align-items: center;
    justify-content: center;
    width: 32px;
}
.tool.lined {
    border-left: 1px solid #e4e4e4;
    border-right: 1px solid #e4e4e4;
}
.menu.dev {
    margin: 0 19px 0 11px;
}
.preview {
    align-self: center;
    margin-right: 10px;
    color: #0a1bd6;
}
.user {
    padding: 0 9px;
    border-left: 1px solid #e4e4e4;
}

/* workspace */
.workspace {
    position: relative;
    display: flex;
    flex: 1;
    min-height: 0;
    overflow: hidden;
}
.side-nav {
    width: 61px;
    border-right: 1px solid #d5d5d5;
}
.side-nav a {
    display: flex;
    flex-direction: column;
    align-items: center;
    justify-content: flex-end;
    height: 60px;
    padding: 0 0 3px 2px;
    gap: 5px;
    border-bottom: 1px solid #d5d5d5;
}
.side-nav a.active {
    padding-left: 0;
    border-left: 4px solid #0a1bd6;
    color: #0a1bd6;
}
.panel {
    display: flex;
    flex-direction: column;
    width: 185px;
}
.panel-tabs {
    display: flex;
    height: 33px;
    font-family: "Liberation Sans", sans-serif;
    border-bottom: 1px solid #d5d5d5;
}
.panel-tabs button {
    flex: 1;
    background: #f7f7f7;
}
.panel-tabs .active {
    background: #fff;
    color: #0a1bd6;
    border-right: 1px solid #d5d5d5;
}
.panel-scroll {
    display: flex;
    flex: 1;
    min-height: 0;
}
.panel-content {
    flex: 1;
}
.panel-thumb {
    width: 5px;
    height: 531px;
    background: #c1c1c1;
}
.panel h2 {
    display: flex;
    align-items: center;
    gap: 10px;
    height: 27px;
    margin: 0;
    padding-left: 18px;
    font-size: 13px;
    font-weight: 400;
    background: #f4f4f4;
    border-bottom: 1px solid #d5d5d5;
}
.panel h2::before {
    content: "";
    border: 4px solid transparent;
    border-top: 5px solid #000;
    border-bottom: none;
}
.hideable {
    display: flex;
    align-items: center;
    justify-content: space-between;
    height: 29px;
    padding: 0 6px 0 10px;
    border-bottom: 1px solid #e2e2e2;
}
.hideable input {
    appearance: none;
    width: 18px;
    height: 18px;
    border: 1px solid #d5d5d5;
    border-radius: 4px;
}
.tree {
    padding-bottom: 2px;
    font-size: 11px;
}
.tree div {
    display: flex;
    align-items: center;
    height: 20px;
    padding: 0 2px 0 1px;
    white-space: nowrap;
}
.tree ul {
    margin-left: 4px;
    padding-left: 4px;
    border-left: 1px solid #dcdcdc;
}
.tree .tg {
    width: 8px;
    height: 8px;
    margin-right: 1px;
}
.tree .eye {
    width: 12px;
    height: 8px;
    margin-left: auto;
}
.hidden-el {
    color: #a4a9ae;
}
.tree .selected {
    color: #0a1bd6;
}
.element-search {
    display: block;
    width: 100%;
    height: 28px;
    padding-left: 10px;
    border-top: 1px solid #d5d5d5;
    border-bottom: 1px solid #d5d5d5;
}
.element-search::placeholder {
    color: #777;
}
.palette li {
    display: flex;
    align-items: center;
    height: 27px;
    padding-left: 8px;
    border-bottom: 1px solid #e4e4e4;
}
.palette li:last-child {
    height: 28px;
    border-color: #d5d5d5;
}
.palette svg {
    width: 18px;
    height: 16px;
    margin-right: 7px;
}
.palette .grey-b {
    color: #868686;
    fill: #868686;
}
.click-icon {
    width: 25px;
    margin: 0 4px 0 -4px;
    border: 1px solid #868686;
    border-radius: 3px;
    color: #777;
    font-size: 6px;
    font-weight: 700;
    line-height: 9px;
    text-align: center;
}
.collapse {
    display: flex;
    align-items: center;
    justify-content: center;
    width: 15px;
    background: #f8f8f8;
    border-left: 1px solid #d5d5d5;
    border-right: 1px solid #d5d5d5;
}
.collapse::before {
    content: "";
    border: 4px solid transparent;
    border-right: 5px solid #000;
    border-left: none;
}

/* page canvas */
.canvas {
    display: flex;
    flex: 1;
    min-width: 0;
}
.artboard {
    position: relative;
    display: flex;
    flex-direction: column;
    width: 1082px;
    margin: 0 auto;
    border-left: 1px solid #0598c6;
    border-right: 1px solid #0598c6;
    font-family: Roboto, sans-serif;
}
.hero {
    height: 166px;
}
.hero-tail {
    height: 66px;
    background: #f9f9f9;
    border-bottom: 1px solid #0598c6;
}
.middle {
    height: 433px;
    border-bottom: 1px solid #0598c6;
}
.rest {
    flex: 1;
    background: #fafafa;
}
.canvas-thumb {
    width: 5px;
    height: 266px;
    margin: 1px 2px 0 0;
    background: #c1c1c1;
}
.field {
    position: absolute;
    width: 437px;
    padding: 0 10px;
    border: 1px solid #d5d5d5;
    border-radius: 4px;
    background: #fcfcfc;
    font-size: 16px;
    font-weight: 500;
}
.field::placeholder {
    color: #aaa;
}
.field-top {
    left: 167px;
    top: 44px;
    height: 103px;
}
.field-mid {
    left: 105px;
    top: 284px;
    height: 57px;
}
.cta {
    position: absolute;
    width: 71px;
    border-radius: 4px;
    background: #00b4c8;
    color: #fff;
    font-size: 16px;
    font-weight: 900;
    line-height: 14px;
}
.cta-top {
    left: 691px;
    top: 70px;
    height: 68px;
    padding: 0 8px;
}
.cta-mid {
    left: 575px;
    top: 324px;
    height: 39px;
}
.rg {
    position: absolute;
    left: 33px;
    top: 390px;
    width: 562px;
    height: 262px;
    display: flex;
    flex-direction: column;
    border: 1px solid #1e88e5;
}
.cell {
    flex: 1;
    display: flex;
    align-items: center;
    padding: 0 0 2px 50px;
    color: #888;
    font-size: 16px;
    font-weight: 300;
    border-bottom: 1px solid #c8c8c8;
}
.cell:first-child {
    color: #333;
}
.cell:nth-child(4) {
    border-bottom: none;
}
.handle {
    position: absolute;
    width: 7px;
    height: 7px;
    border: 1px solid #0f62e6;
    background: #fff;
}
.nw,
.ne {
    top: -4px;
}
.w,
.e {
    top: 128px;
}
.sw,
.s,
.se {
    bottom: -4px;
}
.nw,
.w,
.sw {
    left: -4px;
}
.s {
    left: 278px;
}
.ne,
.e,
.se {
    right: -4px;
}

/* floating windows */
.issues {
    position: absolute;
    left: 788px;
    top: 194px;
    width: 300px;
    height: 209px;
    background: #fff;
    border-radius: 3px;
    box-shadow: 0 1px 4px rgba(0, 0, 0, 0.4);
}
.issues header {
    display: flex;
    align-items: center;
    gap: 13px;
    height: 45px;
    padding: 2px 9px 0 15px;
    font-size: 15px;
    background: #f4f4f4;
    border-bottom: 1px solid #e8e8e8;
}
.issues header button {
    margin-left: auto;
    color: #c6c6c6;
}
.issue-item {
    margin-left: 6px;
    padding: 4px 2px 0 4px;
    font-size: 11px;
    line-height: 13px;
    border-bottom: 1px solid #e8e8e8;
}
.issue-item p {
    margin: 0;
    padding-right: 8px;
}
.issue-item small {
    display: block;
    font-size: 10px;
    text-align: right;
    color: #c4c4c4;
}
.props {
    position: absolute;
    top: 164px;
    width: 340px;
    border-radius: 4px;
    background: #5f6467;
    color: #fff;
    box-shadow: 0 1px 5px rgba(0, 0, 0, 0.4);
}
.expression {
    right: 452px;
}
.editor {
    right: 102px;
}
.props header {
    display: flex;
    align-items: center;
    justify-content: space-between;
    height: 37px;
    padding: 2px 6px 0 12px;
    font-size: 14px;
    background: #2a3031;
    border-radius: 4px 4px 0 0;
}
.props.editor header {
    height: 39px;
}
.head-icons {
    display: flex;
    align-items: center;
    gap: 9px;
    color: #8f979a;
}
.prop-tabs {
    display: flex;
    align-items: flex-end;
    height: 41px;
    padding-left: 12px;
    background: #3a3f41;
    font-size: 13px;
}
.prop-tabs button {
    width: 104px;
    height: 34px;
    color: #585e61;
}
.prop-tabs .active {
    border-radius: 5px 5px 0 0;
    background: #5f6467;
    color: #fff;
    font-weight: 500;
}
.group {
    display: flex;
    flex-direction: column;
    gap: 10px;
    padding: 15px 21px 15px 20px;
    border-bottom: 1px solid #55595c;
}
.expression .group {
    padding-bottom: 10px;
    border-color: #4b5053;
}
.row {
    display: flex;
    align-items: center;
    justify-content: space-between;
    min-height: 30px;
}
.row.top {
    align-items: flex-start;
}
.row.top .name {
    padding-top: 6px;
}
.row.check {
    min-height: 25px;
    padding-top: 4px;
}
.row label,
.name,
.sizes label,
.style-links {
    color: #a7acaf;
}
.wide {
    width: 168px;
}
.props select,
.props input[type="text"] {
    display: block;
    height: 30px;
    padding: 0 8px;
    background: #50565a;
    border-radius: 1px;
    font-weight: 500;
}
.props select {
    appearance: none;
    width: 100%;
}
.select {
    position: relative;
}
.select::after {
    content: "";
    position: absolute;
    right: 10px;
    top: 14px;
    border: 5px solid transparent;
    border-top-color: #8f979a;
    border-bottom: none;
}
.counts {
    display: grid;
    grid-template-columns: 1fr 85px 54px 85px;
    column-gap: 7px;
}
.props .count select {
    padding-right: 26px;
    text-align-last: center;
}
.props input.min {
    width: 60px;
    text-align: center;
}
.props input[type="checkbox"] {
    appearance: none;
    width: 18px;
    height: 18px;
    background: #50565a;
}
.props input:checked {
    background: #50565a url("data:image/svg+xml,%3Csvg xmlns='http://www.w3.org/2000/svg' width='18' height='18'%3E%3Cpath d='M4 9l4 4 6-7' fill='none' stroke='white' stroke-width='3'/%3E%3C/svg%3E");
}
.source {
    min-height: 42px;
    padding: 6px 4px 0;
    line-height: 18px;
    background: #50565a;
}
.source a {
    display: block;
    color: #f5a81f;
}
.source button {
    display: block;
    height: 18px;
    padding: 0 4px;
    line-height: 16px;
    border: 1px solid #ff2050;
    border-radius: 3px;
    color: #9da2a5;
}
.style-select {
    width: 254px;
}
.style-group {
    gap: 0;
    padding: 15px 20px 6px;
}
.style-links {
    display: flex;
    justify-content: space-between;
    padding-left: 50px;
    line-height: 18px;
}
.visible-group {
    padding-top: 5px;
    padding-bottom: 10px;
}
.sizes {
    display: grid;
    grid-template-columns: 16px 63px 16px 63px 16px 63px 16px 44px;
    align-items: center;
}
.props .sizes input {
    width: 44px;
    padding: 0;
    text-align: center;
}
.actions {
    display: flex;
    gap: 18px;
}
.actions + .row {
    margin-top: 5px;
}
.actions button {
    flex: 1;
    height: 35px;
    border: 1px solid #74797c;
    border-radius: 2px;
    background: #696f73;
    box-shadow: 0 1px 2px rgba(0, 0, 0, 0.2);
    font-size: 13px;
    font-weight: 500;
}
.expression footer {
    display: flex;
    align-items: center;
    height: 55px;
    padding-left: 109px;
}
.close-btn {
    width: 100px;
    height: 35px;
    background: #50565a;
    font-size: 14px;
}
.delete-link {
    width: 110px;
    color: #7c8183;
}

/* windows taskbar */
.taskbar {
    position: relative;
    display: flex;
    flex: none;
    height: 40px;
    background: linear-gradient(90deg, #3b3a3c 0, #352f24 400px, #352f24 45%, #1f1f1f 75%);
    color: #fff;
}
.start {
    display: flex;
    align-items: center;
    justify-content: center;
    width: 48px;
}
.task-search {
    display: flex;
    align-items: center;
    width: 344px;
    padding-left: 12px;
    gap: 10px;
    background: #f1f1f1;
    border: 1px solid #c4c4c4;
}
.task-search input {
    flex: 1;
    font-size: 13px;
}
.task-search input::placeholder {
    color: #3a3a3a;
}
.task-apps {
    display: flex;
}
.task-apps button {
    display: flex;
    align-items: center;
    justify-content: center;
    width: 49px;
}
.task-apps .running {
    background: #5e5b52;
    border-bottom: 2px solid #76b9ff;
}
.tray {
    display: flex;
    align-items: center;
    margin-left: auto;
    gap: 11px;
    padding-right: 13px;
}
.temp,
.notice {
    font-size: 13px;
}
.notice {
    margin-right: 6px;
}
.ime {
    font-size: 18px;
}
time {
    line-height: 18px;
    text-align: center;
    font-size: 11px;
}
.notif {
    margin-left: 6px;
}
```
